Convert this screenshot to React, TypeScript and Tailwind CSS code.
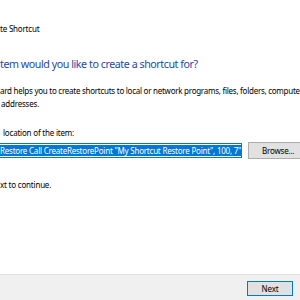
import React from "react";

const font = { fontFamily: '"Noto Sans", "Open Sans", sans-serif' };

export default function App() {
  return (
    <div
      className="relative flex h-[300px] w-[300px] flex-col overflow-hidden bg-white text-[8px] tracking-[-0.2px] text-black"
      style={font}
    >
      <div className="mt-[24px] h-[10px] whitespace-nowrap leading-[10px]">te Shortcut</div>
      <div className="mt-[23px] h-[14px] whitespace-nowrap text-[10.7px] leading-[14px] tracking-[-0.45px] text-[#1f48a6]">
        tem would you like to create a shortcut for?
      </div>
      <div className="mt-[13px] flex flex-col whitespace-nowrap leading-[13px]">
        <div className="tracking-[-0.26px]">ard helps you to create shortcuts to local or network programs, files, folders, compute</div>
        <div className="pl-[1px]">addresses.</div>
      </div>
      <div className="mt-[18px] h-[10px] whitespace-nowrap pl-[3px] leading-[10px]">location of the item:</div>
      <div className="mt-[4px] flex items-center">
        <div className="flex h-[15px] w-[242px] items-center border border-l-0 border-[#0078d7] bg-white">
          <span className="whitespace-nowrap bg-[#0078d7] pr-[1px] leading-[11px] tracking-[-0.22px] text-white">
            Restore Call CreateRestorePoint "My Shortcut Restore Point", 100, 7"
          </span>
        </div>
        <button className="ml-[6px] h-[17px] w-[60px] shrink-0 border border-[#adadad] bg-[#e1e1e1] pl-[13px] text-left leading-[15px]">
          Browse...
        </button>
      </div>
      <div className="mt-[21px] h-[10px] whitespace-nowrap leading-[10px]">xt to continue.</div>
      <div className="mt-auto flex h-[26px] items-start justify-end border-t border-[#dfdfdf] bg-[#f0f0f0] pr-[7px] pt-[6px]">
        <button className="h-[15px] w-[46px] border border-[#0078d7] bg-[#e1e1e1] leading-[13px]">Next</button>
      </div>
    </div>
  );
}
